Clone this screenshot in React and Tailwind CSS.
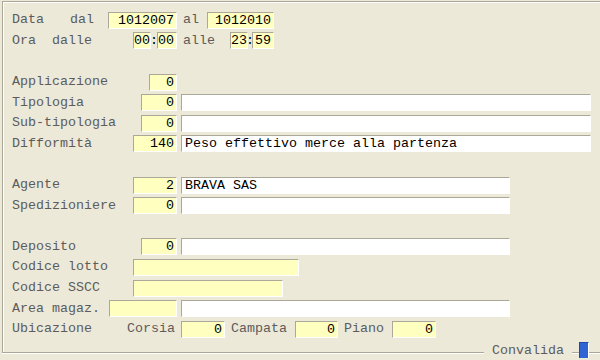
import React from 'react';

// sunken yellow entry field (numbers right aligned)
const Num = ({ className = '', children }) => (
    <div className={`h-[17px] shrink-0 bg-[#ffffc0] border-t border-l border-b border-r border-t-[#aca899] border-l-[#aca899] border-b-white border-r-white text-right pr-[2px] leading-[15px] text-black whitespace-pre ${className}`}>
        {children}
    </div>
);

// sunken white description field
const Desc = ({ className = '', children }) => (
    <div className={`h-[17px] shrink-0 bg-white border-t border-l border-b border-r border-t-[#aca899] border-l-[#aca899] border-b-white border-r-white pl-[3px] leading-[15px] text-black whitespace-pre ${className}`}>
        {children}
    </div>
);

const Row = ({ children }) => <div className="flex items-center h-[20.6px]">{children}</div>;

const Label = ({ className = '', children }) => (
    <div className={`shrink-0 pl-[8px] text-[#5c5c5c] whitespace-pre ${className}`}>{children}</div>
);

const Txt = ({ className = '', children }) => (
    <span className={`shrink-0 text-[#5c5c5c] whitespace-pre ${className}`}>{children}</span>
);

export default function App() {
    return (
        <div className="relative w-[600px] h-[360px] overflow-hidden bg-[#ece9d8] font-['Liberation_Mono','Courier_New',monospace] text-[13.33px]">
            <div className="pt-[1px] pl-[2px]">
                <div className="h-[352px] border-t border-l border-b border-[#aca899] shadow-[0_1px_0_#ffffff]">
                    <div className="h-full border-t border-l border-white pt-[7px]">
                        <Row>
                            <Label className="w-[104px]">Data<span className="ml-[26px]">dal</span></Label>
                            <Num className="w-[69px]">1012007</Num>
                            <Txt className="ml-[6px]">al</Txt>
                            <Num className="ml-[8px] w-[67px]">1012010</Num>
                        </Row>
                        <Row>
                            <Label className="w-[129px]">Ora<span className="ml-[16px]">dalle</span></Label>
                            <Num className="w-[18px] pr-0">00</Num>
                            <span className="w-[6px] flex justify-center text-black">:</span>
                            <Num className="w-[20px] pr-[1px]">00</Num>
                            <Txt className="ml-[6px]">alle</Txt>
                            <Num className="ml-[15px] w-[18px] pr-0">23</Num>
                            <span className="w-[4px] flex justify-center text-black">:</span>
                            <Num className="w-[22px] pr-[1px]">59</Num>
                        </Row>
                        <Row />
                        <Row>
                            <Label className="w-[145px]">Applicazione</Label>
                            <Num className="w-[28px]">0</Num>
                        </Row>
                        <Row>
                            <Label className="w-[137px]">Tipologia</Label>
                            <Num className="w-[36px]">0</Num>
                            <Desc className="ml-[4px] w-[410px]" />
                        </Row>
                        <Row>
                            <Label className="w-[137px]">Sub-tipologia</Label>
                            <Num className="w-[36px]">0</Num>
                            <Desc className="ml-[4px] w-[410px]" />
                        </Row>
                        <Row>
                            <Label className="w-[129px]">Difformità</Label>
                            <Num className="w-[44px]">140</Num>
                            <Desc className="ml-[4px] w-[410px]">Peso effettivo merce alla partenza</Desc>
                        </Row>
                        <Row />
                        <Row>
                            <Label className="w-[129px]">Agente</Label>
                            <Num className="w-[44px]">2</Num>
                            <Desc className="ml-[4px] w-[329px]">BRAVA SAS</Desc>
                        </Row>
                        <Row>
                            <Label className="w-[129px]">Spedizioniere</Label>
                            <Num className="w-[44px]">0</Num>
                            <Desc className="ml-[4px] w-[329px]" />
                        </Row>
                        <Row />
                        <Row>
                            <Label className="w-[137px]">Deposito</Label>
                            <Num className="w-[36px]">0</Num>
                            <Desc className="ml-[4px] w-[329px]" />
                        </Row>
                        <Row>
                            <Label className="w-[129px]">Codice lotto</Label>
                            <Num className="w-[166px]" />
                        </Row>
                        <Row>
                            <Label className="w-[129px]">Codice SSCC</Label>
                            <Num className="w-[150px]" />
                        </Row>
                        <Row>
                            <Label className="w-[105px]">Area magaz.</Label>
                            <Num className="w-[68px]" />
                            <Desc className="ml-[4px] w-[329px]" />
                        </Row>
                        <Row>
                            <Label className="w-[123px]">Ubicazione</Label>
                            <Txt>Corsia</Txt>
                            <Num className="ml-[6px] w-[44px]">0</Num>
                            <Txt className="ml-[6px]">Campata</Txt>
                            <Num className="ml-[8px] w-[43px]">0</Num>
                            <Txt className="ml-[6px]">Piano</Txt>
                            <Num className="ml-[8px] w-[44px]">0</Num>
                        </Row>
                    </div>
                </div>
            </div>

            {/* legend sitting on the bottom edge of the group box */}
            <div className="absolute left-[484px] top-[343px] h-[15px] leading-[15px] px-[8px] bg-[#ece9d8] text-[#5c5c5c]">
                Convalida
            </div>
            <div className="absolute left-[579px] top-[342px] w-[10px] h-[16px] bg-[#3064d2] border-t border-l border-[#1f48a8] border-r border-r-white" />
        </div>
    );
}
